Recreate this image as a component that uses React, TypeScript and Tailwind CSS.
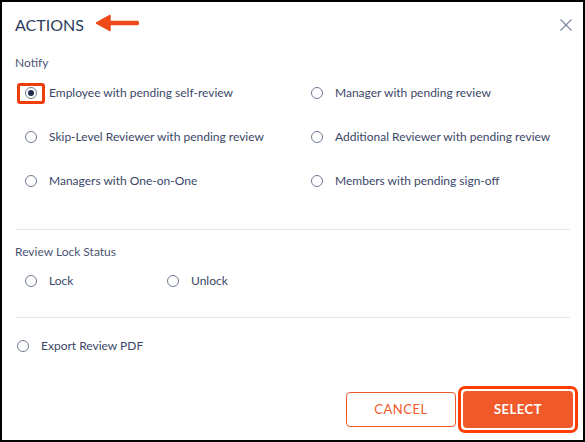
import React from "react";

const notifyOptions = [
  ["Employee with pending self-review", "Manager with pending review"],
  ["Skip-Level Reviewer with pending review", "Additional Reviewer with pending review"],
  ["Managers with One-on-One", "Members with pending sign-off"],
];

function Radio({ label, checked = false, highlight = false }: { label: string; checked?: boolean; highlight?: boolean }) {
  return (
    <label className="flex items-center gap-[12px] cursor-pointer">
      <span className="relative flex items-center justify-center w-[12px] h-[12px] rounded-full border border-[#6f7a93] bg-white shrink-0">
        {checked && <span className="w-[6px] h-[6px] rounded-full bg-[#1e2b4d]" />}
        {highlight && (
          <span className="absolute -left-[9px] -top-[5px] w-[28px] h-[21px] rounded-[3px] border-[3px] border-[#f03d0c]" />
        )}
      </span>
      <span className="text-[12px] leading-[16px] text-[#3a4767]">{label}</span>
    </label>
  );
}

export default function App() {
  return (
    <div
      className="w-[585px] h-[442px] bg-white border-2 border-black flex flex-col"
      style={{ fontFamily: "Lato, 'Open Sans', sans-serif" }}
    >
      <div className="flex items-center h-[20px] mt-[13px] pl-[13px] pr-[10px]">
        <h2 className="text-[16px] leading-[20px] text-[#2b3a5c]">ACTIONS</h2>
        <svg className="ml-[11px] -mt-[4px]" width="44" height="18" viewBox="0 0 44 18">
          <path d="M42 9H12" stroke="#f04a1a" strokeWidth="4.5" strokeLinecap="round" />
          <path d="M1.5 9L15 1.5V16.5Z" fill="#f04a1a" stroke="#f04a1a" strokeWidth="1.5" strokeLinejoin="round" />
        </svg>
        <div className="flex-1" />
        <button className="w-[14px] h-[14px] flex items-center justify-center">
          <svg width="12" height="12" viewBox="0 0 12 12">
            <path d="M0.5 0.5L11.5 11.5M11.5 0.5L0.5 11.5" stroke="#7a869e" strokeWidth="1.1" />
          </svg>
        </button>
      </div>

      <div className="px-[13px]">
        <div className="mt-[20px] text-[12px] leading-[16px] text-[#4a5573]">Notify</div>
        <div className="grid grid-cols-[286px_1fr] auto-rows-[44px] pl-[10px]">
          {notifyOptions.map((row, i) =>
            row.map((label, j) => (
              <div key={`${i}-${j}`} className="flex items-center">
                <Radio label={label} checked={i === 0 && j === 0} highlight={i === 0 && j === 0} />
              </div>
            ))
          )}
        </div>

        <div className="mt-[26px] h-px bg-[#e4e6ea]" />

        <div className="mt-[14px] text-[12px] leading-[16px] text-[#4a5573]">Review Lock Status</div>
        <div className="flex items-center h-[42px] pl-[10px]">
          <div className="w-[142px]">
            <Radio label="Lock" />
          </div>
          <Radio label="Unlock" />
        </div>

        <div className="mt-[15px] h-px bg-[#e4e6ea]" />

        <div className="mt-[8px] flex items-center h-[40px] pl-[2px]">
          <Radio label="Export Review PDF" />
        </div>
      </div>

      <div className="mt-[20px] flex items-center justify-end gap-[2px] pr-[5px]">
        <button className="w-[110px] h-[35px] rounded-[4px] border border-[#f05a28] bg-white text-[13px] tracking-[0.5px] text-[#f05a28]">
          CANCEL
        </button>
        <div className="rounded-[7px] border-[3px] border-[#ff3d00] p-[2px]">
          <button className="w-[110px] h-[37px] rounded-[4px] bg-[#f05a2a] text-[13px] font-bold tracking-[0.5px] text-white">
            SELECT
          </button>
        </div>
      </div>
    </div>
  );
}
